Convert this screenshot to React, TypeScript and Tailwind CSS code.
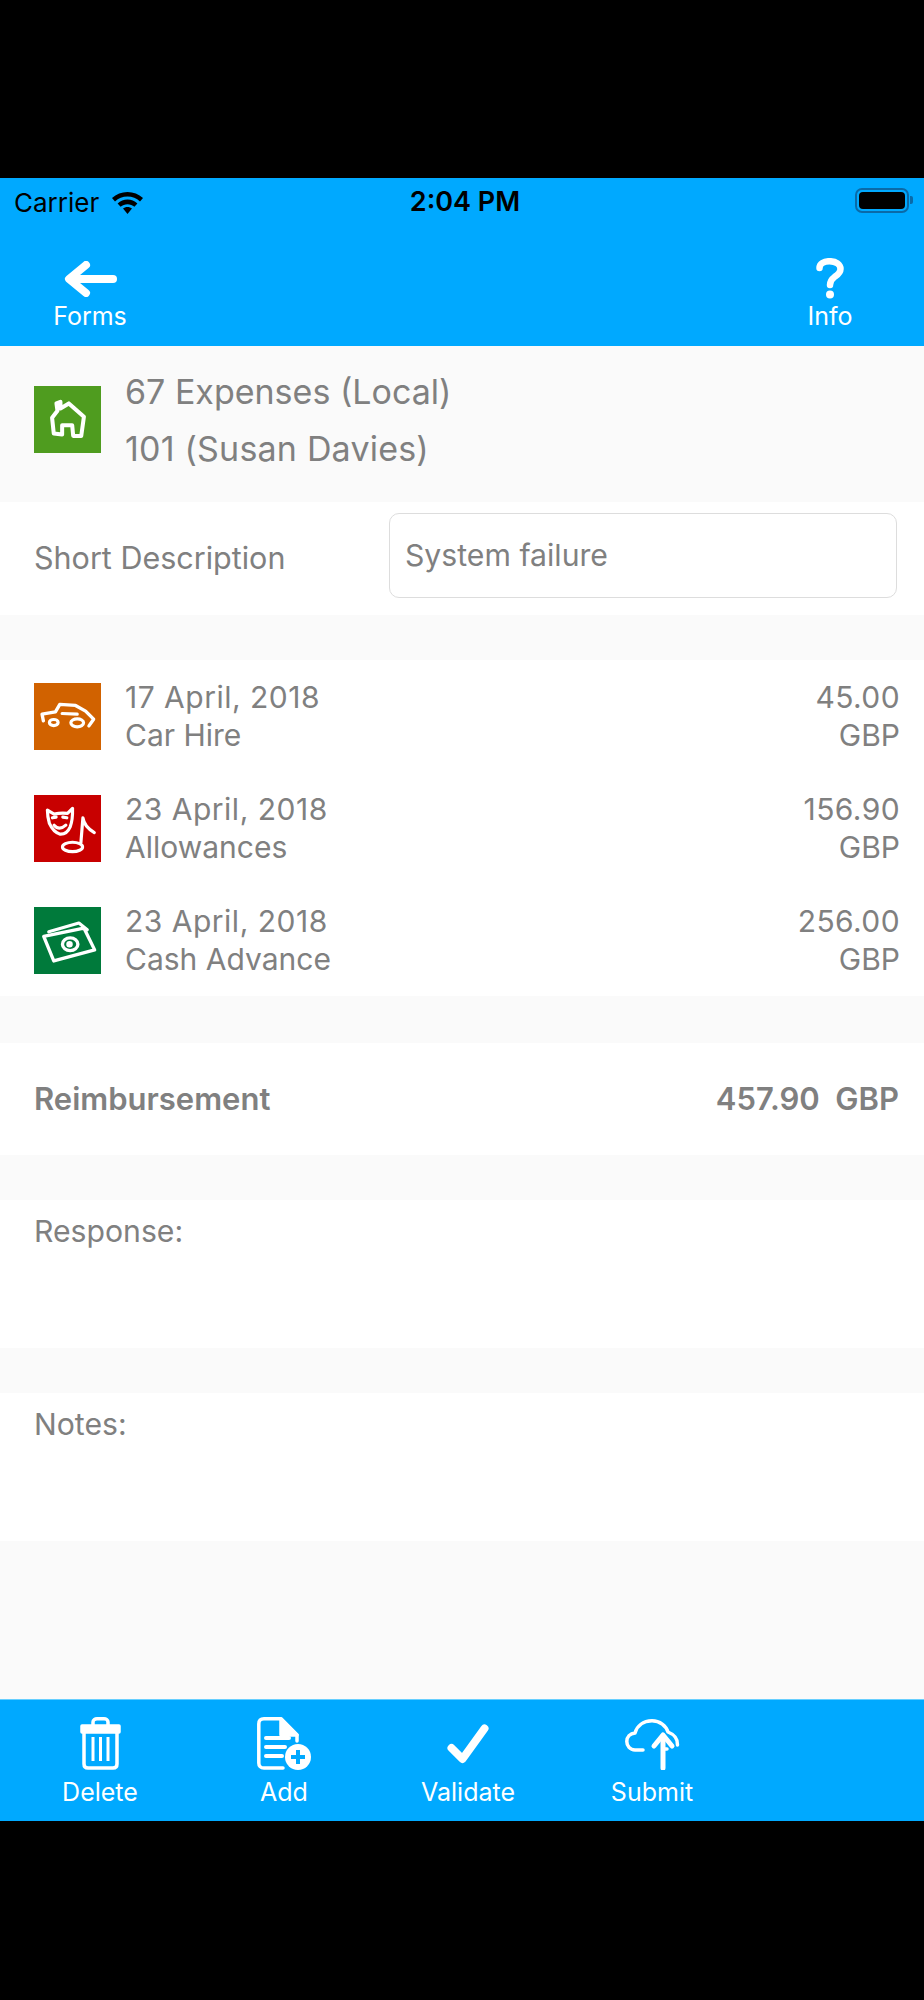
import React from "react";

const TEXT = "text-[#808080]";

function Tile({ bg, children }: { bg: string; children: React.ReactNode }) {
  return (
    <div className={`w-[67px] h-[67px] shrink-0 ${bg}`}>
      <svg viewBox="0 0 200 200" className="w-full h-full" fill="none" stroke="#fff" strokeWidth="9.5" strokeLinecap="round" strokeLinejoin="round">
        {children}
      </svg>
    </div>
  );
}

const House = () => (
  <path d="M84 145V117H114L117 149L141 149L149 92L104 52L79 67L79 47L67 52L70 74L54 95L59 142L84 145" strokeWidth="12" />
);
const Car = () => (
  <>
    <path d="M28 113L24 93L64 86L77 64L124 67L154 84L178 108L164 128" strokeWidth="10" />
    <path d="M84 91L129 93" />
    <ellipse cx="59" cy="118" rx="13" ry="9" />
    <ellipse cx="129" cy="119" rx="19" ry="12" />
  </>
);
const Mask = () => (
  <>
    <path d="M40 45L60 57Q82 52 100 55L115 40Q116 75 108 95Q98 118 78 117Q58 112 46 85Q40 65 40 45Z" />
    <path d="M55 68L66 66M86 66L98 68M60 90Q75 108 95 90" />
    <path d="M140 142L146 68Q150 95 180 112" />
    <ellipse cx="115" cy="155" rx="30" ry="14" />
  </>
);
const Cash = () => (
  <>
    <path d="M29 88L149 63L181 128L59 161Z" strokeWidth="10" />
    <path d="M44 74L134 48L159 68" />
    <ellipse cx="108" cy="111" rx="23" ry="19" strokeWidth="10" />
    <circle cx="106" cy="111" r="5" fill="#fff" />
  </>
);

function ExpenseRow({ bg, icon, date, name, amount }: { bg: string; icon: React.ReactNode; date: string; name: string; amount: string }) {
  return (
    <div className={`h-[112px] flex items-center pl-[34px] pr-[24px] ${TEXT}`}>
      <Tile bg={bg}>{icon}</Tile>
      <div className="ml-[24px] flex-1 text-[30px] leading-[38px]">
        <div className="tracking-[0.5px]">{date}</div>
        <div>{name}</div>
      </div>
      <div className="text-right text-[30px] leading-[38px]">
        <div className="tracking-[0.4px]">{amount}</div>
        <div>GBP</div>
      </div>
    </div>
  );
}

function ToolItem({ label, children }: { label: string; children: React.ReactNode }) {
  return (
    <div className="w-[184px] flex flex-col items-center">
      <div className="h-[56px] flex items-end justify-center">{children}</div>
      <div className="mt-[7px] text-[25px] leading-[30px] text-white">{label}</div>
    </div>
  );
}

export default function App() {
  return (
    <div className="w-[924px] h-[2000px] bg-black flex flex-col font-['Inter',sans-serif]">
      <div className="h-[178px]" />

      <div className="h-[168px] bg-[#00a9ff] flex flex-col">
        <div className="h-[49px] relative flex items-center pl-[14px] pr-[11px]">
          <span className="text-[26px] text-black">Carrier</span>
          <svg viewBox="0 0 31 22" className="w-[31px] h-[22px] ml-[13px]" fill="#000">
            <path d="M15.5 0C9.6 0 4.3 2.2 0 6L3 9.4C6.4 6.4 10.7 4.6 15.5 4.6S24.6 6.4 28 9.4L31 6C26.7 2.2 21.4 0 15.5 0Z" />
            <path d="M15.5 7.6C11.8 7.6 8.4 9 5.6 11.4L8.6 14.8C10.5 13.2 12.9 12.2 15.5 12.2S20.5 13.2 22.4 14.8L25.4 11.4C22.6 9 19.2 7.6 15.5 7.6Z" />
            <path d="M15.5 15C13.7 15 12.2 15.6 11 16.6L15.5 22L20 16.6C18.8 15.6 17.3 15 15.5 15Z" />
          </svg>
          <span className="absolute left-0 right-0 text-center pl-[6px] text-[27px] font-semibold text-black">2:04 PM</span>
          <div className="ml-auto flex items-center -mt-[5px]">
            <div className="w-[54px] h-[25px] rounded-[7px] border-2 border-[#0a6aa8] p-[2px]">
              <div className="w-full h-full rounded-[4px] bg-black" />
            </div>
            <div className="w-[3px] h-[8px] ml-[1px] bg-[#0a6aa8] rounded-r-[2px]" />
          </div>
        </div>
        <div className="flex-1 flex justify-between pl-[50px] pr-[74px] pt-[28px]">
          <div className="w-[80px] flex flex-col items-center">
            <svg viewBox="0 0 53 36" className="w-[53px] h-[36px] mt-[6px]" fill="none" stroke="#fff" strokeWidth="8" strokeLinecap="round" strokeLinejoin="round">
              <path d="M22 4L5 18L22 32" />
              <path d="M7 18H49" />
            </svg>
            <div className="text-[25px] leading-[28px] mt-[5px] text-white">Forms</div>
          </div>
          <div className="w-[40px] flex flex-col items-center">
            <svg viewBox="0 0 28 41" className="w-[28px] h-[41px] mt-[3px]" fill="none" stroke="#fff" strokeWidth="6.5" strokeLinecap="round">
              <path d="M3.5 10C3.5 5.5 8 3.2 13.5 3.2C20 3.2 24.5 6.5 24.5 11C24.5 15 21.5 16.8 18.5 19C15.5 21.2 14 23 14 27" />
              <circle cx="14" cy="36.5" r="4" fill="#fff" stroke="none" />
            </svg>
            <div className="text-[25px] leading-[28px] mt-[3px] text-white">Info</div>
          </div>
        </div>
      </div>

      <div className={`h-[156px] bg-[#fafafa] flex items-start pl-[34px] ${TEXT}`}>
        <div className="mt-[40px]">
          <Tile bg="bg-[#4f9c1f]"><House /></Tile>
        </div>
        <div className="ml-[24px] mt-[17px] text-[34px] leading-[57px]">
          <div>67 Expenses (Local)</div>
          <div className="tracking-[0.2px]">101 (Susan Davies)</div>
        </div>
      </div>

      <div className={`h-[113px] bg-white flex items-start pl-[34px] ${TEXT}`}>
        <div className="w-[355px] pt-[38px] text-[30.5px] leading-[36px]">Short Description</div>
        <div className="mt-[11px] w-[508px] h-[85px] rounded-[10px] border border-[#dddddd] pl-[15px] pt-[21px] text-[30.2px] leading-[40px]">
          System failure
        </div>
      </div>

      <div className="h-[45px] bg-[#fafafa]" />

      <div className="h-[336px] bg-white">
        <ExpenseRow bg="bg-[#d16200]" icon={<Car />} date="17 April, 2018" name="Car Hire" amount="45.00" />
        <ExpenseRow bg="bg-[#c80000]" icon={<Mask />} date="23 April, 2018" name="Allowances" amount="156.90" />
        <ExpenseRow bg="bg-[#007a3b]" icon={<Cash />} date="23 April, 2018" name="Cash Advance" amount="256.00" />
      </div>

      <div className="h-[47px] bg-[#fafafa]" />

      <div className={`h-[112px] bg-white flex items-center justify-between pl-[34px] pr-[25px] text-[31px] font-semibold ${TEXT}`}>
        <span>Reimbursement</span>
        <span>457.90&nbsp;&nbsp;GBP</span>
      </div>

      <div className="h-[45px] bg-[#fafafa]" />

      <div className={`h-[148px] bg-white pl-[34px] pt-[13px] text-[30.2px] leading-[36px] ${TEXT}`}>Response:</div>

      <div className="h-[45px] bg-[#fafafa]" />

      <div className={`h-[148px] bg-white pl-[34px] pt-[13px] text-[30.2px] leading-[36px] ${TEXT}`}>Notes:</div>

      <div className="h-[158px] bg-[#fafafa]" />

      <div className="h-[122px] bg-[#00a9ff] border-t border-[#66cfff] flex pl-[8px] pt-[14px]">
        <ToolItem label="Delete">
          <svg viewBox="0 0 41 53" className="w-[41px] h-[53px]" fill="none" stroke="#fff" strokeWidth="3.5" strokeLinejoin="round" strokeLinecap="round">
            <path d="M13 8V5C13 3 15 1.8 17 1.8H24C26 1.8 28 3 28 5V8" />
            <path d="M2 9H39V15H2Z" fill="#fff" />
            <path d="M4 15V47C4 49.5 5.5 51 8 51H33C35.5 51 37 49.5 37 47V15" />
            <path d="M13 20V44M20.5 20V44M28 20V44" strokeWidth="3" strokeLinecap="butt" />
          </svg>
        </ToolItem>
        <ToolItem label="Add">
          <svg viewBox="0 0 54 53" className="w-[54px] h-[53px]" fill="none" stroke="#fff" strokeWidth="3.5" strokeLinejoin="round" strokeLinecap="round">
            <path d="M26 51H7C3.5 51 1.8 49 1.8 46V7C1.8 3.5 3.5 1.8 7 1.8H24L40 18V24" />
            <path d="M24 2V18H40Z" fill="#fff" />
            <path d="M9 21H32M9 30H28M9 39H25" strokeWidth="4" />
            <circle cx="41" cy="40" r="13" fill="#fff" stroke="none" />
            <path d="M41 33V47M34 40H48" stroke="#00a9ff" strokeWidth="4" strokeLinecap="butt" />
          </svg>
        </ToolItem>
        <ToolItem label="Validate">
          <svg viewBox="0 0 42 40" className="w-[42px] h-[40px] mb-[6px]" fill="none" stroke="#fff" strokeWidth="8" strokeLinejoin="round" strokeLinecap="round">
            <path d="M4.5 24L15.5 35L37.5 4.5" />
          </svg>
        </ToolItem>
        <ToolItem label="Submit">
          <svg viewBox="0 0 55 51" className="w-[55px] h-[51px]" fill="none" stroke="#fff" strokeWidth="3.5" strokeLinejoin="round" strokeLinecap="round">
            <path d="M18 31H10C5 31 1.8 27 1.8 22.5C1.8 18 5 14.5 10 14C12 7 18 1.8 27 1.8C35 1.8 41 7 43 13C48 15 53 19 52.5 26" />
            <path d="M38 30H42" />
            <path d="M38 49V17" strokeWidth="5" />
            <path d="M29 27L38 16L47 27" strokeWidth="5" />
          </svg>
        </ToolItem>
      </div>

      <div className="flex-1" />
    </div>
  );
}
